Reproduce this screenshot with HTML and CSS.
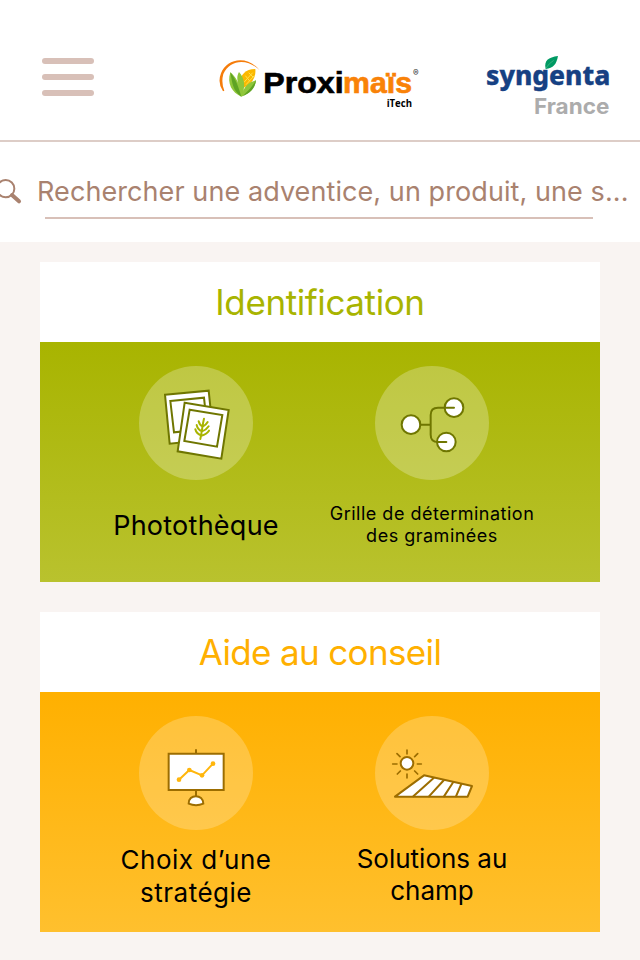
FILE: index.html
```html
<!DOCTYPE html>
<html lang="fr">
<head>
<meta charset="utf-8">
<title>Proximaïs iTech</title>
<link rel="stylesheet" href="styles.css">
</head>
<body>
<header class="header">
  <div class="menu"><span></span><span></span><span></span></div>
  <svg class="logo" viewBox="0 0 660 195">
    <path d="M39 124A58 58 0 0 1 33 70C48 26 112 13 149 61C114 25 60 27 40 72Q33 98 43 122Z" fill="#f57c0a"/>
    <path d="M93 116C82 84 102 56 136 57C139 89 117 108 93 116Z" fill="#fbb800"/>
    <path d="M101 98L128 68M108 104L133 77M106 77L120 94M116 68L130 82" stroke="#ffe04a" stroke-width="3"/>
    <path d="M94 140C66 128 50 101 61 67C76 80 82 92 86 104C80 86 81 77 87 66C105 84 105 111 99 126C106 106 116 98 138 91C134 119 119 129 94 140Z" fill="#8fc63a"/>
    <path d="M94 140C68 122 67 100 61 67C80 92 86 113 94 140ZM98 139C110 127 125 113 138 91C134 119 119 130 98 139Z" fill="#5fa324"/>
    <text class="brand" x="160" y="128" textLength="241" lengthAdjust="spacingAndGlyphs">Proxi</text>
    <text class="brand orange" x="399" y="128" textLength="207" lengthAdjust="spacingAndGlyphs">maïs</text>
    <text class="reg" x="609" y="78">®</text>
    <text class="itech" x="530" y="171" textLength="76" lengthAdjust="spacingAndGlyphs">iTech</text>
  </svg>
  <svg class="syngenta" viewBox="0 0 450 225">
    <path d="M212 57C206 32 220 22 249 18C244 44 235 54 212 57Z" fill="#009a63"/>
    <path d="M213 54Q222 40 236 31" stroke="#55b98f" stroke-width="2" fill="none"/>
    <text class="syn" x="33" y="105" textLength="373" lengthAdjust="spacingAndGlyphs">syngenta</text>
    <text class="france" x="177" y="192" textLength="226" lengthAdjust="spacingAndGlyphs">France</text>
  </svg>
</header>
<div class="search">
  <svg class="glass" viewBox="0 0 66 84"><circle cx="17" cy="29" r="26" fill="none" stroke="#a9826f" stroke-width="6"/><path d="M36 48L57 67" stroke="#a9826f" stroke-width="12" stroke-linecap="round"/></svg>
  <div class="query">Rechercher une adventice, un produit, une s...</div>
  <div class="rule"></div>
</div>
<main>
  <section class="card green">
    <h2 class="t1">Identification</h2>
    <div class="body">
      <div class="item">
        <svg class="icon" viewBox="27 18 342 342" stroke="#6f7600" stroke-width="6" fill="#fff">
          <circle cx="198" cy="189" r="171" fill="#fff" fill-opacity=".25" stroke="none"/>
          <path d="M105 104L236 92L251 237L119 251Z"/><path d="M121 123L222 113L232 207L132 217Z"/>
          <path d="M164 128L296 150L274 296L143 274Z"/><path d="M179 149L277 165L261 260L163 243Z"/>
          <g fill="none" stroke="#a8b400" stroke-width="6" stroke-linecap="round"><path d="M222 176C217 195 216 215 211 237M206 184Q209 196 218 200Q228 195 233 186M200 195Q203 209 216 214Q229 210 236 199M196 208Q199 221 214 227Q230 223 237 212"/></g>
        </svg>
        <p class="photo">Photothèque</p>
      </div>
      <div class="item">
        <svg class="icon" viewBox="15 18 342 342" stroke="#6f7600" stroke-width="6" fill="#fff" stroke-linecap="round">
          <circle cx="186" cy="189" r="171" fill="#fff" fill-opacity=".25" stroke="none"/>
          <circle cx="123" cy="194" r="28"/><circle cx="252" cy="143" r="28"/><circle cx="229" cy="246" r="28"/>
          <path fill="none" d="M151 194H182M252 143H204Q182 143 182 165V224Q182 246 204 246H229"/>
        </svg>
        <p class="small">Grille de détermination<br>des graminées</p>
      </div>
    </div>
  </section>
  <section class="card amber">
    <h2 class="t2">Aide au conseil</h2>
    <div class="body">
      <div class="item">
        <svg class="icon" viewBox="27 18 342 342" stroke="#9c6d00" stroke-width="6" fill="#fff" stroke-linecap="round">
          <circle cx="198" cy="189" r="171" fill="#fff" fill-opacity=".22" stroke="none"/>
          <path d="M198 120V131M198 241V259"/><path d="M116 131H281V240H116Z"/>
          <path d="M176 281C175 251 220 251 220 281Q198 290 176 281Z"/>
          <path d="M147 209L178 180L216 196L249 161" fill="none" stroke="#ffb60c"/>
          <g fill="#ffb60c" stroke="none"><circle cx="147" cy="209" r="7"/><circle cx="178" cy="180" r="7"/><circle cx="216" cy="196" r="7"/><circle cx="249" cy="161" r="7"/></g>
        </svg>
        <p class="large wide">Choix d’une<br>stratégie</p>
      </div>
      <div class="item">
        <svg class="icon" viewBox="15 18 342 342" stroke="#9c6d00" stroke-width="6" fill="#fff" stroke-linecap="round" stroke-linejoin="round">
          <circle cx="186" cy="189" r="171" fill="#fff" fill-opacity=".22" stroke="none"/>
          <circle cx="111" cy="160" r="19"/>
          <path stroke-width="5" d="M111 120V132M111 192V204M68 162H81M142 162H154M81 131L90 140M143 131L134 140M91 183L82 192M134 183L143 192"/>
          <path d="M75 260L162 196L306 228L293 260Z"/><path d="M130 259L191 204M177 259L222 210M222 259L250 216M258 259L274 222"/>
        </svg>
        <p class="large raised">Solutions au<br>champ</p>
      </div>
    </div>
  </section>
</main>
</body>
</html>
```
FILE: styles.css
```css
* { box-sizing: border-box; }
body { margin: 0; height: 960px; overflow: hidden; background: #f9f4f2; font-family: Inter, "Liberation Sans", sans-serif; color: #000; }
.header { height: 142px; background: #fff; border-bottom: 2px solid #ddcdc7; display: flex; align-items: flex-start; padding: 50px 0 0 42px; }
.menu { display: flex; flex-direction: column; gap: 10px; width: 52px; padding-top: 8px; margin-right: 116px; }
.menu span { height: 6px; border-radius: 3px; background: #d8c0b8; }
.logo { width: 220px; height: 65px; flex: none; }
.syngenta { width: 150px; height: 75px; margin-left: 45px; flex: none; }
.brand { font: 700 91px "Liberation Sans", sans-serif; fill: #000; stroke: #000; stroke-width: 2px; }
.orange { fill: #f98208; stroke: #f98208; }
.reg { font: 500 25px Inter, sans-serif; fill: #333; }
.itech { font: 700 30px "Open Sans", sans-serif; fill: #000; }
.syn { font: 800 81px "Noto Sans", sans-serif; fill: #164183; stroke: #164183; stroke-width: 1px; }
.france { font: 700 65px Inter, sans-serif; fill: #acacac; }
.search { height: 100px; background: #fff; display: grid; grid-template-columns: 37px 1fr; grid-template-rows: 75px 2px; }
.glass { width: 22px; height: 28px; margin-top: 37px; }
.query { font-size: 27px; line-height: 34px; margin-top: 33px; color: #a9826f; white-space: nowrap; letter-spacing: 0.08px; }
.rule { grid-column: 1 / 3; margin: 0 47px 0 45px; background: #d8c0b8; }
main { padding: 20px 40px; }
.card { height: 320px; margin-bottom: 30px; }
h2 { margin: 0; height: 80px; line-height: 81px; font-size: 35px; font-weight: 400; text-align: center; background: #fff; }
.t1 { letter-spacing: -0.4px; }
.t2 { letter-spacing: -0.65px; }
.green h2 { color: #a8b400; }
.amber h2 { color: #ffb000; }
.body { height: 240px; display: flex; padding: 24px 46px 0 38px; }
.item { width: 236px; flex: none; display: flex; flex-direction: column; align-items: center; }
.icon { width: 114px; height: 114px; flex: none; }
.green .body { background: linear-gradient(#a8b400, #b9c22e); }
.amber .body { background: linear-gradient(#ffb000, #ffc02e); }
p { margin: 0; text-align: center; white-space: nowrap; }
.photo { font-size: 27px; line-height: 34px; margin-top: 29px; letter-spacing: 0.25px; }
.small { font-size: 18px; line-height: 22px; margin-top: 23px; letter-spacing: 0.5px; }
.large { font-size: 26px; line-height: 33px; margin-top: 13px; }
.wide { letter-spacing: 0.5px; }
.raised { line-height: 32px; }
```
